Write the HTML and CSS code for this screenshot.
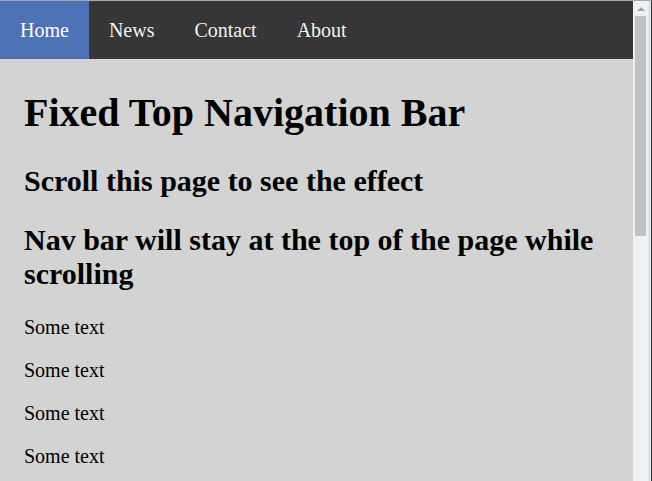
FILE: index.html
```html
<!DOCTYPE html>
<html>
<head>
<meta charset="utf-8">
<link rel="stylesheet" href="styles.css">
</head>
<body>
<div class="screen">
  <div class="window">
    <nav class="navbar">
      <a class="active" href="#home">Home</a>
      <a href="#news">News</a>
      <a href="#contact">Contact</a>
      <a href="#about">About</a>
    </nav>
    <div class="main">
      <h1>Fixed Top Navigation Bar</h1>
      <h2>Scroll this page to see the effect</h2>
      <h2>Nav bar will stay at the top of the page while scrolling</h2>
      <p>Some text</p>
      <p>Some text</p>
      <p>Some text</p>
      <p>Some text</p>
    </div>
  </div>
  <div class="scrollbar">
    <div class="arrow-btn"><span class="arrow-up"></span></div>
    <div class="track">
      <div class="thumb"></div>
    </div>
  </div>
  <div class="frame-edge"></div>
</div>
</body>
</html>
```

FILE: styles.css
```css
html, body {
  margin: 0;
  padding: 0;
  height: 100%;
  overflow: hidden;
}

body {
  font-family: "Liberation Serif", "Times New Roman", serif;
  font-size: 20px;
  background: #dfe3ea;
}

.screen {
  display: flex;
  height: 481px;
  box-sizing: border-box;
  border-top: 1px solid #a9a9a9;
  border-right: 1px solid #333333;
}

.window {
  width: 633px;
  flex: none;
  overflow: hidden;
  background: #d3d3d3;
  color: #000;
}

.scrollbar {
  width: 15px;
  flex: none;
  display: flex;
  flex-direction: column;
  background: #f1f1f1;
}

.arrow-btn {
  height: 15px;
  display: flex;
  align-items: center;
  justify-content: center;
}

.arrow-up {
  width: 0;
  height: 0;
  border-left: 4px solid transparent;
  border-right: 4px solid transparent;
  border-bottom: 4px solid #a3a3a3;
}

.track {
  flex: 1;
  padding: 0 2px;
}

.thumb {
  height: 220px;
  background: #c1c1c1;
}

.frame-edge {
  flex: 1;
  background: #dfe3ea;
}

.navbar {
  display: flex;
  background: #363636;
}

.navbar a {
  display: block;
  padding: 17px 20px;
  line-height: 24px;
  color: #f2f2f2;
  text-decoration: none;
  font-size: 20px;
}

.navbar a.active {
  background: #4e72b6;
  color: #fff;
}

.main {
  padding: 3px 24px 20px;
}

.main h1 {
  font-size: 40px;
  margin: 26.8px 0 27.8px;
}

.main h2 {
  font-size: 30px;
  margin: 25.9px 0 24.9px;
}

.main p {
  margin: 20px 0;
}
```
